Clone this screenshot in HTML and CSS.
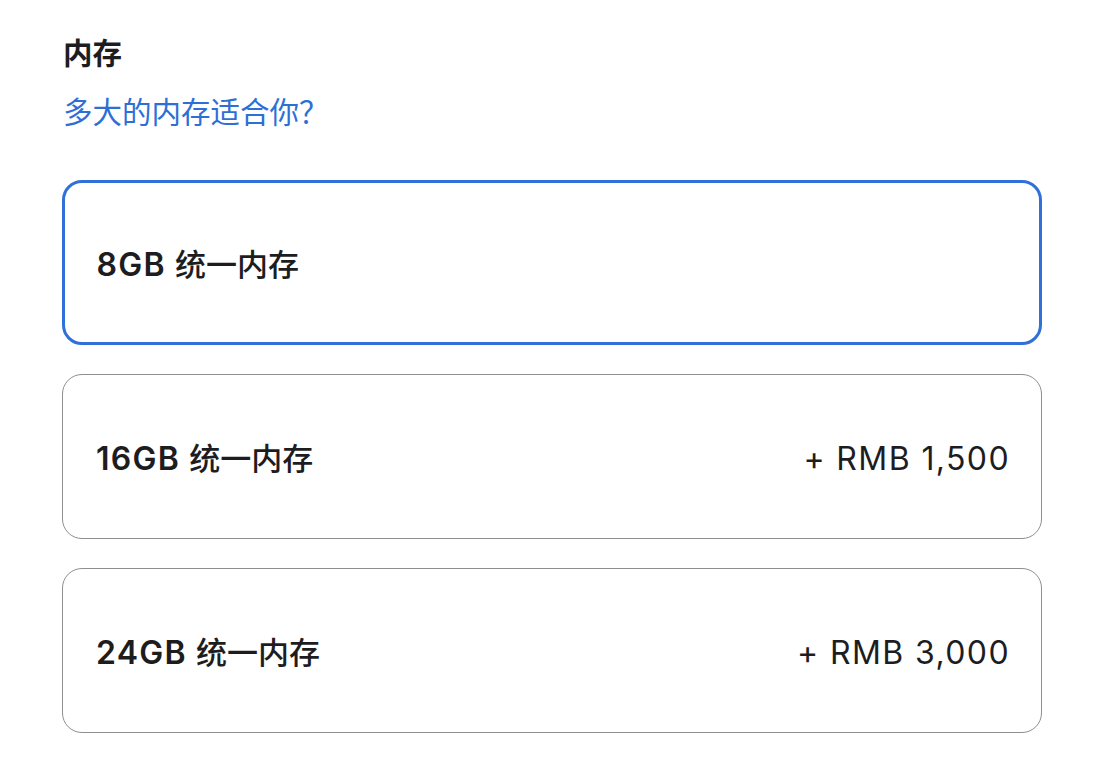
FILE: index.html
```html
<!DOCTYPE html>
<html lang="zh-CN">
<head>
<meta charset="utf-8">
<link rel="stylesheet" href="styles.css">
</head>
<body>
<section class="memory">
  <h2 class="title">内存</h2>
  <a class="help" href="#">多大的内存适合你？</a>
  <div class="options">
    <div class="option selected">
      <span class="name"><span class="size">8GB</span>统一内存</span>
    </div>
    <div class="option">
      <span class="name"><span class="size">16GB</span>统一内存</span>
      <span class="price">+ RMB 1,500</span>
    </div>
    <div class="option">
      <span class="name"><span class="size">24GB</span>统一内存</span>
      <span class="price">+ RMB 3,000</span>
    </div>
  </div>
</section>
</body>
</html>
```
FILE: styles.css
```css
html, body {
  margin: 0;
  padding: 0;
  background: #ffffff;
}
body {
  font-family: "Inter", "Noto Sans CJK SC", sans-serif;
  color: #1d1d1f;
}
.memory {
  width: 980px;
  padding: 35px 0 0 62px;
  display: flex;
  flex-direction: column;
}
.title {
  margin: 0 0 0 1px;
  font-size: 29.5px;
  line-height: 36px;
  font-weight: 600;
}
.help {
  margin: 23px 0 0 1px;
  font-size: 29.5px;
  line-height: 36px;
  color: #2e6fd6;
  text-decoration: none;
}
.options {
  margin-top: 50px;
  display: flex;
  flex-direction: column;
  gap: 29px;
}
.option {
  box-sizing: border-box;
  height: 165px;
  border: 1.5px solid #8e8e93;
  border-radius: 20px;
  padding: 4px 33px 0 33px;
  display: flex;
  align-items: center;
  justify-content: space-between;
}
.option.selected {
  border: 3px solid #2f70d9;
  padding: 4px 31px 0 31.5px;
}
.name {
  font-size: 31px;
  line-height: 40px;
  font-weight: 500;
}
.size {
  font-size: 32px;
  font-weight: 600;
  letter-spacing: 1.3px;
  margin-right: 9px;
}
.price {
  font-size: 32px;
  line-height: 40px;
  font-weight: 400;
  letter-spacing: 1.4px;
  margin-right: -2px;
}
```
